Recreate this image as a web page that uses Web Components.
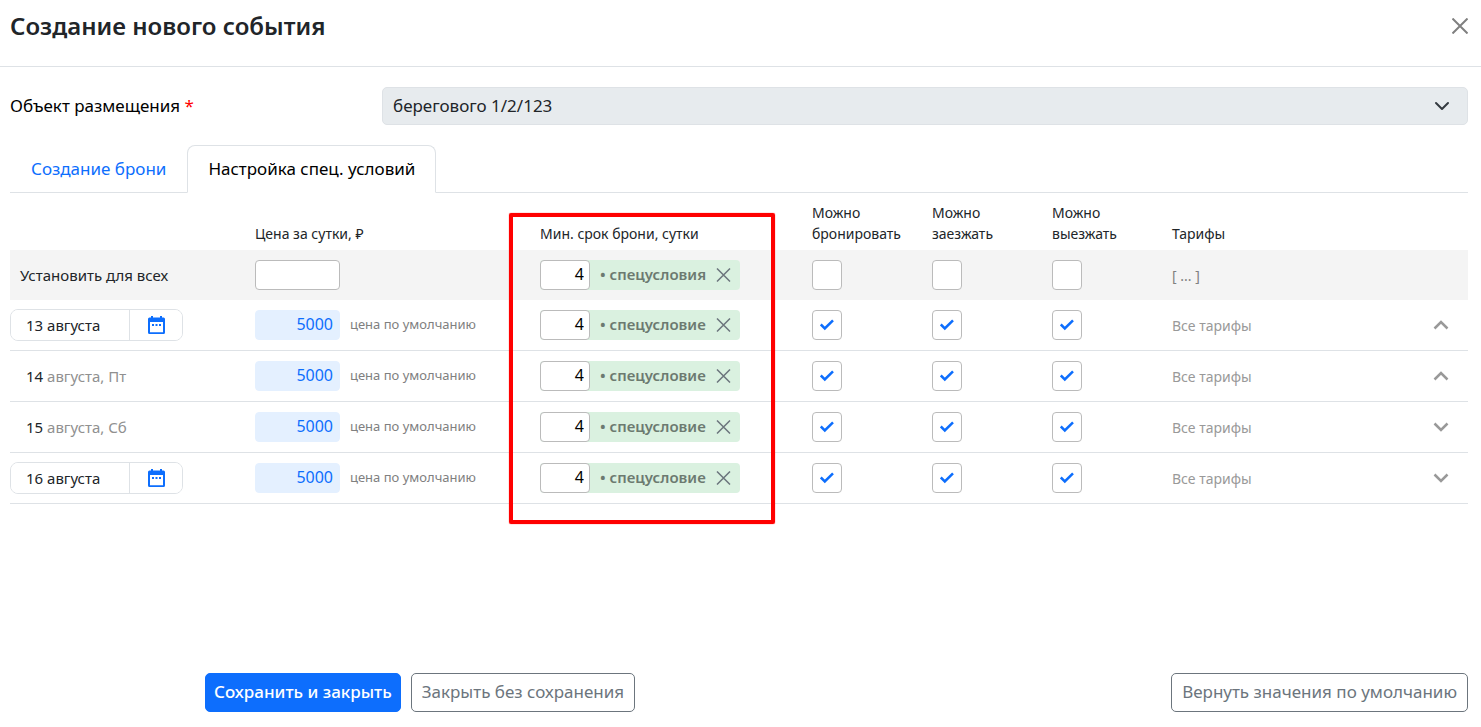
<!DOCTYPE html>
<html lang="ru">
<head>
<meta charset="utf-8">
<title>Создание нового события</title>
<style>
  body {
    margin: 0;
    background: #fff;
    color: #212529;
    font-family: "Noto Sans", "Open Sans", sans-serif;
    font-size: 16px;
  }
</style>
</head>
<body>
<event-dialog>
  <span slot="title">Создание нового события</span>
  <object-field slot="object" label="Объект размещения" value="берегового 1/2/123"></object-field>
  <tab-bar slot="tabs">
    <a href="#booking">Создание брони</a>
    <a href="#conditions" aria-current="page">Настройка спец. условий</a>
  </tab-bar>
  <conditions-table></conditions-table>
  <action-button slot="actions" variant="primary">Сохранить и закрыть</action-button>
  <action-button slot="actions">Закрыть без сохранения</action-button>
  <action-button slot="reset">Вернуть значения по умолчанию</action-button>
</event-dialog>

<script>
const days = [
  { day: 13, rest: 'августа', picker: true, open: true },
  { day: 14, rest: 'августа, Пт', open: true },
  { day: 15, rest: 'августа, Сб' },
  { day: 16, rest: 'августа', picker: true },
];

class EventDialog extends HTMLElement {
  constructor() {
    super();
    this.attachShadow({ mode: 'open' }).innerHTML = `
      <style>
        :host {
          display: flex;
          flex-direction: column;
          min-height: 100vh;
        }
        header {
          display: flex;
          justify-content: space-between;
          align-items: flex-start;
          padding: 10px 13px 24px 10px;
          border-bottom: 1px solid #dee2e6;
        }
        h1 {
          margin: 0;
          font-size: 24px;
          font-weight: 600;
          line-height: 32px;
        }
        .close {
          display: flex;
          padding: 8px 0;
          border: none;
          background: none;
          cursor: pointer;
        }
        main {
          flex: 1;
          padding: 20px 13px 20px 10px;
        }
        footer {
          display: flex;
          gap: 10px;
          padding: 0 13px 15px 205px;
        }
        .reset { margin-left: auto; }
      </style>
      <header>
        <h1><slot name="title"></slot></h1>
        <button class="close" aria-label="Закрыть">
          <svg width="16" height="16" viewBox="0 0 16 16" fill="none" stroke="#808080" stroke-width="2">
            <path d="M.5 .5l15 15M15.5 .5l-15 15"/>
          </svg>
        </button>
      </header>
      <main>
        <slot name="object"></slot>
        <slot name="tabs"></slot>
        <slot></slot>
      </main>
      <footer>
        <slot name="actions"></slot>
        <div class="reset"><slot name="reset"></slot></div>
      </footer>
    `;
  }
}

class ObjectField extends HTMLElement {
  connectedCallback() {
    if (this.shadowRoot) return;
    this.attachShadow({ mode: 'open' }).innerHTML = `
      <style>
        :host {
          display: grid;
          grid-template-columns: 372px 1fr;
          align-items: center;
          margin-bottom: 20px;
          font-size: 17px;
        }
        label { padding-bottom: 2px; color: #000; }
        label span { color: #f00; }
        .box { display: grid; align-items: center; }
        .box > * { grid-area: 1 / 1; }
        select {
          appearance: none;
          width: 100%;
          height: 38px;
          padding: 0 40px 2px 10px;
          border: 1px solid #dee2e6;
          border-radius: 5px;
          background: #e7ebee;
          color: #212529;
          font: inherit;
        }
        svg {
          justify-self: end;
          margin-right: 18px;
          pointer-events: none;
        }
      </style>
      <label for="object">${this.getAttribute('label')} <span>*</span></label>
      <div class="box">
        <select id="object"><option>${this.getAttribute('value')}</option></select>
        <svg width="16" height="16" viewBox="0 0 16 16" fill="none" stroke="#343a40" stroke-width="2" stroke-linecap="round" stroke-linejoin="round">
          <path d="M2 5l6 6 6-6"/>
        </svg>
      </div>
    `;
  }
}

class TabBar extends HTMLElement {
  constructor() {
    super();
    this.attachShadow({ mode: 'open' }).innerHTML = `
      <style>
        :host { display: block; }
        nav {
          display: flex;
          border-bottom: 1px solid #dee2e6;
          font-size: 17px;
        }
        ::slotted(a) {
          margin-bottom: -1px;
          padding: 0 20px;
          border: 1px solid transparent;
          border-radius: 8px 8px 0 0;
          color: #0d6efd;
          line-height: 46px;
          text-decoration: none;
        }
        ::slotted(a[aria-current]) {
          border-color: #dee2e6 #dee2e6 #fff;
          background: #fff;
          color: #000;
        }
      </style>
      <nav><slot></slot></nav>
    `;
  }
}

class DateField extends HTMLElement {
  connectedCallback() {
    if (this.shadowRoot) return;
    this.attachShadow({ mode: 'open' }).innerHTML = `
      <style>
        :host {
          display: flex;
          box-sizing: border-box;
          width: 173px;
          height: 32px;
          border: 1px solid #dee2e6;
          border-radius: 8px;
          overflow: hidden;
        }
        input {
          flex: 1;
          min-width: 0;
          padding: 0 0 0 15px;
          border: none;
          color: #212529;
          font: inherit;
        }
        button {
          display: grid;
          place-items: center;
          width: 53px;
          padding: 0;
          border: none;
          border-left: 1px solid #dee2e6;
          background: #fff;
          cursor: pointer;
        }
      </style>
      <input type="text" aria-label="Дата" value="${this.getAttribute('value')}">
      <button aria-label="Открыть календарь">
        <svg width="17" height="18" viewBox="0 0 17 18" fill="#0d6efd">
          <path fill-rule="evenodd" d="M3 0h2v1.500h7V0h2v1.500h1.500A1.500 1.500 0 0 1 17 3v13.500a1.500 1.500 0 0 1-1.500 1.500h-14A1.500 1.500 0 0 1 0 16.500V3a1.500 1.500 0 0 1 1.500-1.500H3zM2 6v10.300h13V6z"/>
          <path d="M4 8h2v2H4zM7.500 8h2v2h-2zM11 8h2v2h-2z"/>
        </svg>
      </button>
    `;
  }
}

class PriceField extends HTMLElement {
  connectedCallback() {
    if (this.shadowRoot) return;
    const value = this.getAttribute('value') || '';
    this.attachShadow({ mode: 'open' }).innerHTML = `
      <style>
        :host { display: flex; align-items: center; gap: 10px; }
        input {
          box-sizing: border-box;
          width: 85px;
          height: 30px;
          padding: 0 6px 2px;
          border: 1px solid #bbb;
          border-radius: 4px;
          background: #fff;
          color: #0d6efd;
          font: inherit;
          text-align: right;
        }
        input.default { border-color: #e4f0ff; background: #e4f0ff; }
        span { padding-bottom: 2px; color: #808080; font-size: 13px; }
      </style>
      <input type="text" aria-label="Цена за сутки" value="${value}" class="${value ? 'default' : ''}">
      ${value ? '<span>цена по умолчанию</span>' : ''}
    `;
  }
}

class MinStay extends HTMLElement {
  constructor() {
    super();
    this.attachShadow({ mode: 'open' }).innerHTML = `
      <style>
        :host {
          display: flex;
          align-items: center;
          width: 200px;
          height: 30px;
          border-radius: 4px;
          background: #daf1e0;
        }
        input {
          box-sizing: border-box;
          width: 50px;
          height: 30px;
          padding: 0 5px 2px;
          border: 1px solid #bbb;
          border-radius: 4px;
          color: #000;
          font: inherit;
          text-align: right;
        }
        span {
          flex: 1;
          padding: 0 0 2px 10px;
          color: #6c7a70;
          font-size: 15px;
          font-weight: 600;
          white-space: nowrap;
        }
        button {
          display: flex;
          padding: 0 10px;
          border: none;
          background: none;
          cursor: pointer;
        }
      </style>
      <input type="text" aria-label="Мин. срок брони" value="4">
      <span>• <slot></slot></span>
      <button aria-label="Сбросить">
        <svg width="15" height="14" viewBox="0 0 15 14" fill="none" stroke="#6c757d" stroke-width="1.500">
          <path d="M1 .5l13 13M14 .5l-13 13"/>
        </svg>
      </button>
    `;
  }
}

class CheckBox extends HTMLElement {
  connectedCallback() {
    if (this.shadowRoot) return;
    this.attachShadow({ mode: 'open' }).innerHTML = `
      <style>
        :host { display: block; }
        label { display: inline-grid; place-items: center; vertical-align: top; }
        label > * { grid-area: 1 / 1; }
        input {
          appearance: none;
          width: 30px;
          height: 30px;
          margin: 0;
          border: 1px solid #bbb;
          border-radius: 4px;
          background: #fff;
        }
        svg { visibility: hidden; pointer-events: none; }
        input:checked + svg { visibility: visible; }
      </style>
      <label>
        <input type="checkbox" aria-label="${this.getAttribute('label')}" ${this.hasAttribute('checked') ? 'checked' : ''}>
        <svg width="14" height="12" viewBox="0 0 14 12" fill="none" stroke="#0d6efd" stroke-width="2.500">
          <path d="M.8 5.500l4 4L13 1.300"/>
        </svg>
      </label>
    `;
  }
}

class ActionButton extends HTMLElement {
  constructor() {
    super();
    this.attachShadow({ mode: 'open' }).innerHTML = `
      <style>
        :host { display: block; }
        button {
          height: 39px;
          padding: 0 10px 2px;
          border: 1px solid #6c757d;
          border-radius: 5px;
          background: #fff;
          color: #6c757d;
          font: inherit;
          font-size: 17px;
          cursor: pointer;
        }
        :host([variant="primary"]) button {
          padding: 0 8px 2px;
          border-color: #0d6efd;
          background: #0d6efd;
          color: #fff;
          font-weight: 500;
        }
      </style>
      <button><slot></slot></button>
    `;
  }
}

class ConditionsTable extends HTMLElement {
  connectedCallback() {
    if (this.shadowRoot) return;
    this.attachShadow({ mode: 'open' }).innerHTML = `
      <style>
        :host { display: block; position: relative; }
        table {
          width: 100%;
          border-collapse: separate;
          border-spacing: 0;
          table-layout: fixed;
        }
        .date { width: 245px; }
        .price { width: 285px; }
        .stay { width: 272px; }
        .flag { width: 120px; }
        .toggle { width: 43px; }
        th {
          padding: 9px 0 6px;
          font-size: 14px;
          font-weight: 400;
          line-height: 21px;
          text-align: left;
          vertical-align: bottom;
        }
        td {
          height: 50px;
          padding: 0;
          border-bottom: 1px solid #dee2e6;
          font-size: 16px;
        }
        .all td { border: none; background: #f4f4f4; }
        .all td:first-child { padding-left: 10px; font-size: 15px; }
        .plain { padding-left: 16px; color: #909090; }
        .plain b { color: #212529; font-weight: 400; }
        td.rates { color: #999; font-size: 14px; }
        .all td.rates { color: #808080; }
        td button {
          display: flex;
          padding: 8px;
          border: none;
          background: none;
          cursor: pointer;
        }
        date-field, .plain { font-size: 15px; }
        .frame {
          position: absolute;
          top: 20px;
          left: 499px;
          box-sizing: border-box;
          width: 266px;
          height: 311px;
          border: 4px solid #f00;
          border-radius: 2px;
          box-shadow: 0 0 1px #f00;
          pointer-events: none;
        }
      </style>
      <table>
        <colgroup>
          <col class="date"><col class="price"><col class="stay">
          <col class="flag"><col class="flag"><col class="flag"><col><col class="toggle">
        </colgroup>
        <thead>
          <tr>
            <th></th>
            <th>Цена за сутки, ₽</th>
            <th>Мин. срок брони, сутки</th>
            <th>Можно<br>бронировать</th>
            <th>Можно<br>заезжать</th>
            <th>Можно<br>выезжать</th>
            <th>Тарифы</th>
            <th></th>
          </tr>
        </thead>
        <tbody>
          <tr class="all">
            <td>Установить для всех</td>
            <td><price-field></price-field></td>
            <td><min-stay>спецусловия</min-stay></td>
            ${this.flags(false)}
            <td class="rates">[ ... ]</td>
            <td></td>
          </tr>
          ${days.map(d => this.row(d)).join('')}
        </tbody>
      </table>
      <div class="frame"></div>
    `;
  }

  flags(checked) {
    return ['Можно бронировать', 'Можно заезжать', 'Можно выезжать']
      .map(label => `<td><check-box label="${label}" ${checked ? 'checked' : ''}></check-box></td>`)
      .join('');
  }

  row({ day, rest, picker, open }) {
    const date = picker
      ? `<td><date-field value="${day} ${rest}"></date-field></td>`
      : `<td class="plain"><b>${day}</b> ${rest}</td>`;
    return `
      <tr>
        ${date}
        <td><price-field value="5000"></price-field></td>
        <td><min-stay>спецусловие</min-stay></td>
        ${this.flags(true)}
        <td class="rates">Все тарифы</td>
        <td>
          <button aria-label="${open ? 'Свернуть' : 'Развернуть'}" aria-expanded="${!!open}">
            <svg width="16" height="16" viewBox="0 0 16 16" fill="none" stroke="#999" stroke-width="2.500">
              <path d="${open ? 'M1.500 11.500L8 5l6.500 6.500' : 'M1.500 4.500L8 11l6.500-6.500'}"/>
            </svg>
          </button>
        </td>
      </tr>
    `;
  }
}

customElements.define('event-dialog', EventDialog);
customElements.define('object-field', ObjectField);
customElements.define('tab-bar', TabBar);
customElements.define('date-field', DateField);
customElements.define('price-field', PriceField);
customElements.define('min-stay', MinStay);
customElements.define('check-box', CheckBox);
customElements.define('action-button', ActionButton);
customElements.define('conditions-table', ConditionsTable);
</script>
</body>
</html>
